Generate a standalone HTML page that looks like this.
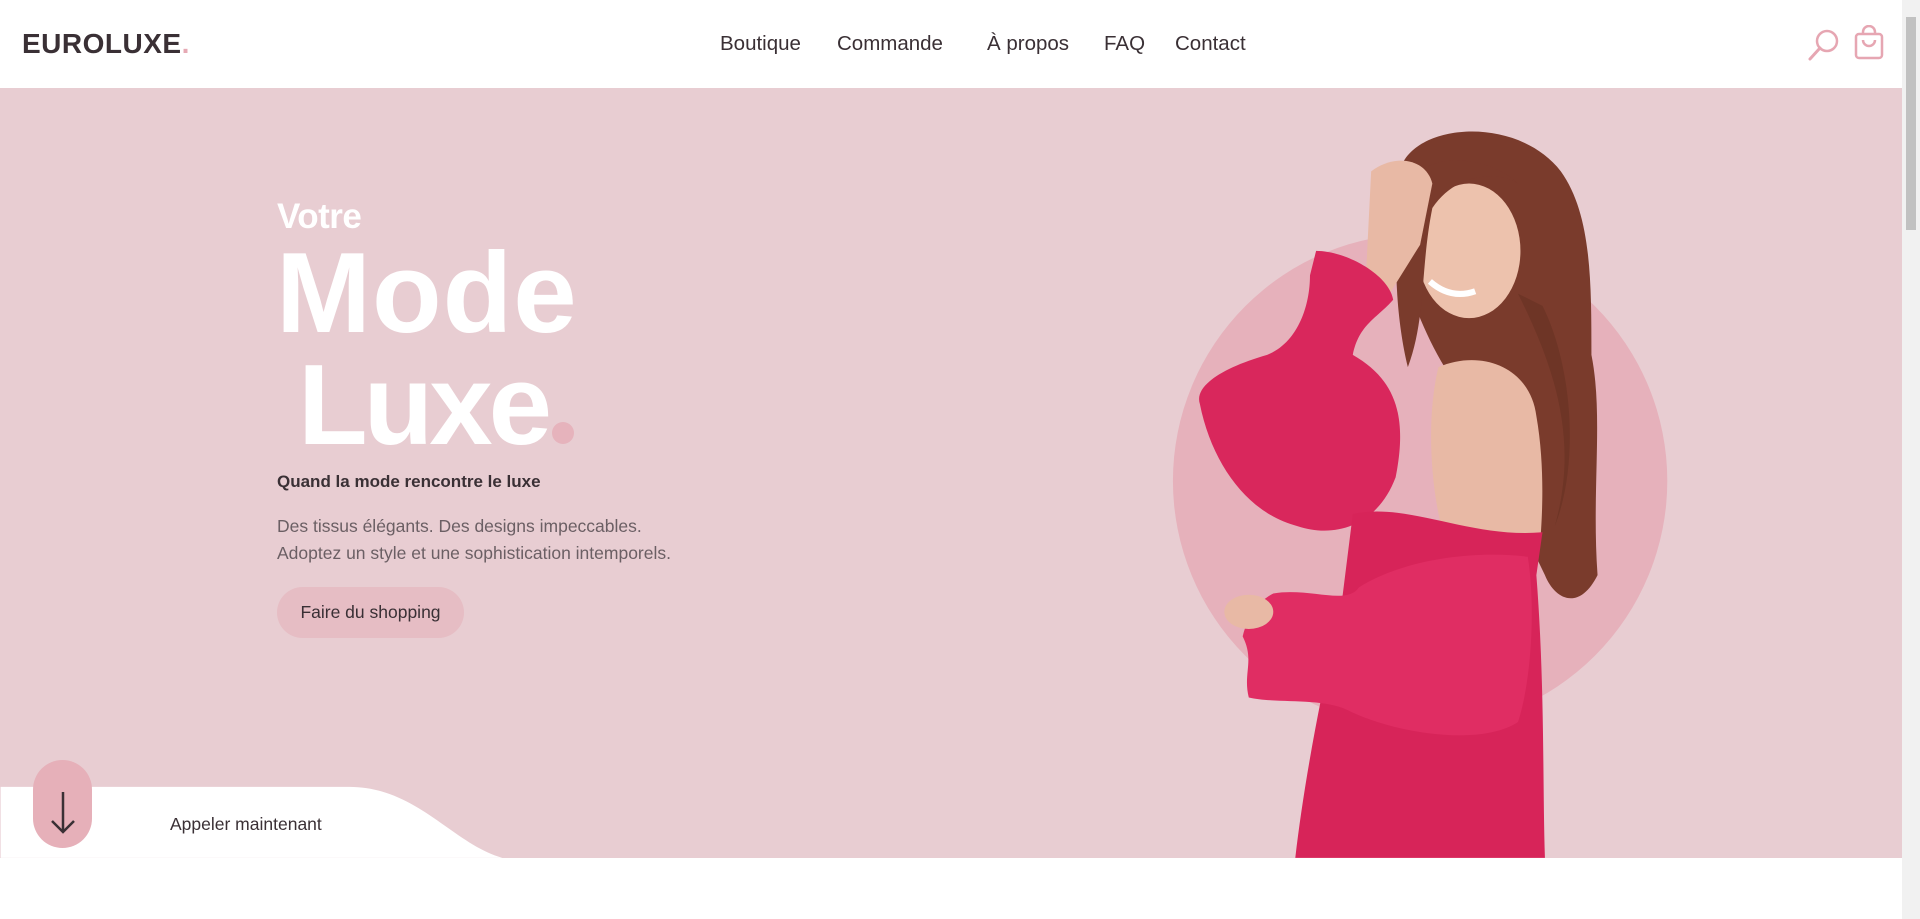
<!DOCTYPE html>
<html><head><meta charset="utf-8"><style>
*{margin:0;padding:0;box-sizing:border-box}
body{width:1920px;height:919px;overflow:hidden;background:#fff;font-family:"Liberation Sans",sans-serif;position:relative;color:#3a3035}
.hdr{position:absolute;left:0;top:0;width:1902px;height:88px;background:#fff}
.logo{position:absolute;left:22px;top:28px;font-size:28px;font-weight:bold;letter-spacing:0.5px;color:#3a3035}
.logo span{color:#e6a9b4}
.nav{position:absolute;top:32px;font-size:20.5px;color:#3a3035}
.hero{position:absolute;left:0;top:88px;width:1902px;height:770px;background:#e8cdd2}
.t{position:absolute;color:#fff;font-weight:bold;white-space:nowrap}
.sb{position:absolute;right:0;top:0;width:18px;height:919px;background:#f1f1f1}
.sb div{position:absolute;left:4px;top:17px;width:10px;height:213px;background:#c1c1c1}
.dot{display:inline-block;width:22px;height:22px;border-radius:50%;background:#e6b3bc;margin-left:4px}
</style></head><body>
<div class="hero"></div>
<svg style="position:absolute;left:0;top:0" width="1920" height="919" viewBox="0 0 1568 751">
<path d="M0 643 L285 643 C340 643 370 690 410 701 L0 701Z" fill="#fff"/>
<circle cx="1160" cy="393" r="202" fill="#e6b1bb"/>
<path d="M1145 135 C1160 100 1240 95 1275 140 C1300 175 1300 230 1300 290 C1310 340 1300 400 1305 470 C1290 500 1270 490 1262 470 L1180 300 C1150 250 1130 180 1145 135Z" fill="#7a3b2c"/>
<path d="M1175 300 C1210 285 1250 300 1255 340 C1262 380 1260 420 1258 445 L1180 440 C1168 400 1165 340 1175 300Z" fill="#e8b9a5"/>
<ellipse cx="1200" cy="205" rx="42" ry="55" fill="#edc2ad"/>
<path d="M1168 230 Q1185 245 1205 238" stroke="#fff" stroke-width="5" fill="none"/>
<path d="M1150 150 C1170 120 1220 130 1240 150 C1225 140 1190 140 1170 170 C1160 220 1165 260 1150 300 C1140 260 1135 190 1150 150Z" fill="#7a3b2c"/>
<path d="M1240 240 C1270 300 1290 360 1270 430 C1290 380 1285 300 1260 250Z" fill="#6e3526"/>
<path d="M1120 140 C1140 125 1165 130 1170 150 L1160 200 L1135 240 L1115 240 Z" fill="#e8b9a5"/>
<path d="M1075 205 C1100 205 1135 225 1138 245 C1125 260 1110 265 1105 290 C1140 310 1150 340 1140 390 C1125 430 1090 440 1060 430 C1020 420 990 380 980 330 C975 315 1000 300 1035 290 C1060 280 1070 250 1070 225Z" fill="#d9275c"/>
<path d="M1105 420 C1150 410 1200 440 1260 435 L1255 470 C1262 560 1260 640 1262 701 L1058 701 C1065 640 1080 560 1095 500Z" fill="#d72459"/>
<path d="M1040 485 C1070 480 1100 495 1110 480 C1150 455 1210 450 1248 455 C1255 500 1250 560 1240 590 C1210 610 1140 600 1100 580 C1080 570 1040 575 1020 570 C1015 550 1025 540 1015 520 C1020 500 1030 490 1040 485Z" fill="#e02d63"/>
<ellipse cx="1020" cy="500" rx="20" ry="14" fill="#e8b9a5"/>
</svg>
<div class="hdr">
<div class="logo">EUROLUXE<span>.</span></div>
<div class="nav" style="left:720px">Boutique</div>
<div class="nav" style="left:837px">Commande</div>
<div class="nav" style="left:987px">À propos</div>
<div class="nav" style="left:1104px">FAQ</div>
<div class="nav" style="left:1175px">Contact</div>
<svg style="position:absolute;left:1806px;top:28px" width="34" height="34" viewBox="0 0 34 34"><circle cx="21" cy="13" r="10" stroke="#e6a6b2" stroke-width="2.5" fill="none"/><path d="M14 20 L4 31" stroke="#e6a6b2" stroke-width="3" stroke-linecap="round"/></svg>
<svg style="position:absolute;left:1853px;top:25px" width="32" height="36" viewBox="0 0 32 36"><rect x="3" y="9" width="26" height="24" rx="3" stroke="#e6a6b2" stroke-width="2.5" fill="none"/><path d="M10 9 V7 a6 6 0 0 1 12 0 V9 M10 15 a6 6 0 0 0 12 0" stroke="#e6a6b2" stroke-width="2.5" fill="none"/></svg>
</div>
<div class="t" style="left:277px;top:197px;font-size:35px;letter-spacing:-0.5px">Votre</div>
<div class="t" style="left:276px;top:228px;font-size:114px;letter-spacing:1px">Mode</div>
<div class="t" style="left:298px;top:340px;font-size:114px;letter-spacing:-4px">Luxe<span class="dot"></span></div>
<div style="position:absolute;left:277px;top:472px;font-size:17px;font-weight:bold;color:#3a3035">Quand la mode rencontre le luxe</div>
<div style="position:absolute;left:277px;top:513px;font-size:17.5px;line-height:27px;color:#6b5f64">Des tissus élégants. Des designs impeccables.<br>Adoptez un style et une sophistication intemporels.</div>
<div style="position:absolute;left:277px;top:587px;width:187px;height:51px;border-radius:26px;background:#e6bdc4;font-size:17.5px;color:#3a3035;text-align:center;line-height:51px">Faire du shopping</div>
<div style="position:absolute;left:33px;top:760px;width:59px;height:88px;border-radius:30px;background:#e6b0b9"></div>
<svg style="position:absolute;left:48px;top:790px" width="30" height="50" viewBox="0 0 30 50"><path d="M15 2 V42 M4 31 L15 42 L26 31" stroke="#3a3035" stroke-width="2.5" fill="none"/></svg>
<div style="position:absolute;left:170px;top:814px;font-size:17.5px;color:#3a3035">Appeler maintenant</div>
<div class="sb"><div></div></div>
</body></html>
